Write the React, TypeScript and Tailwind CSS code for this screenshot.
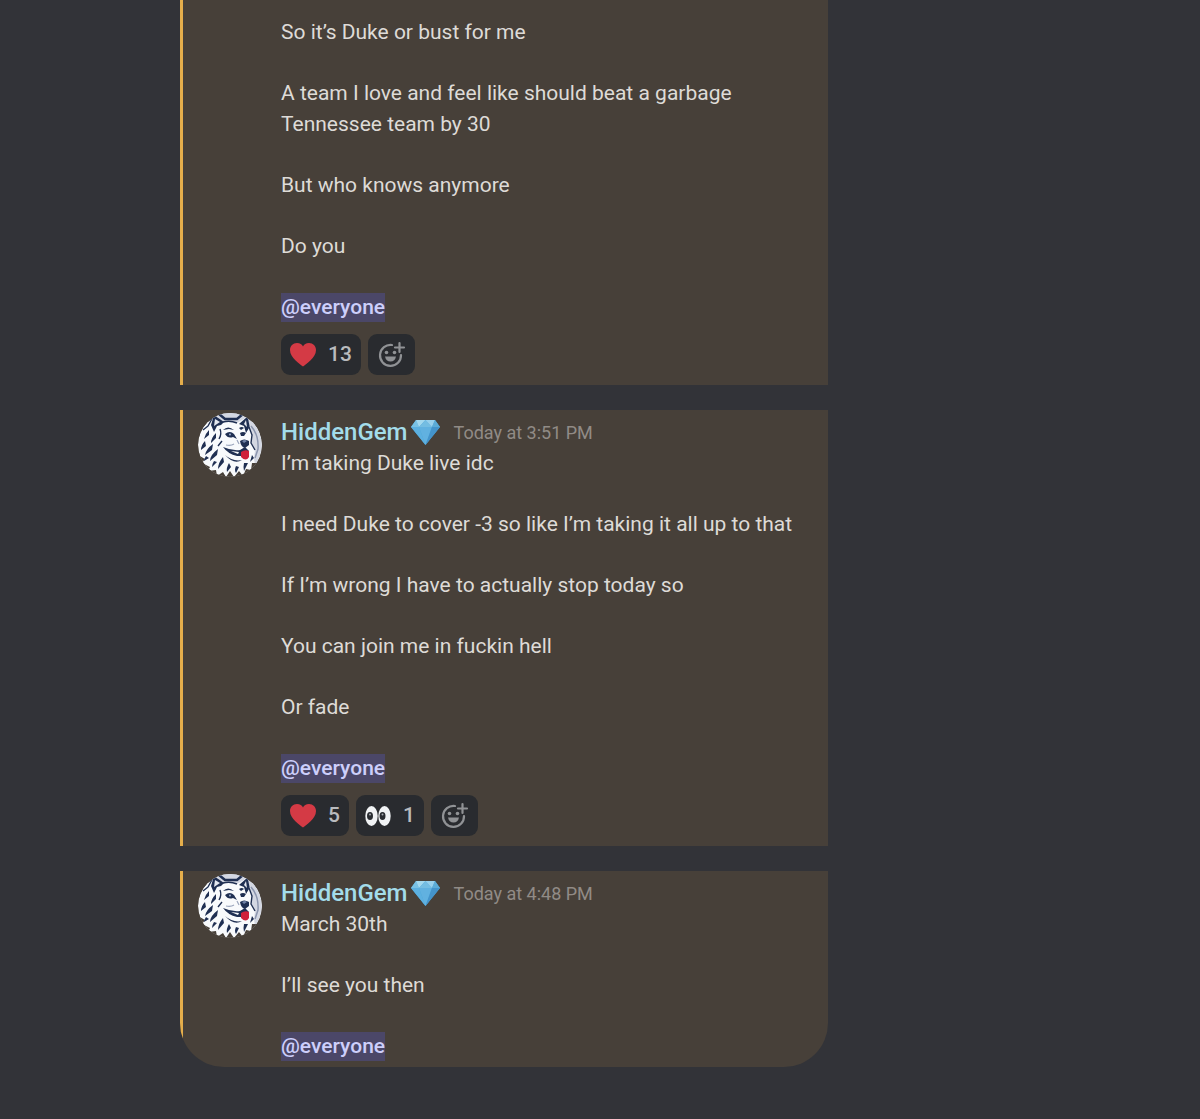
import type { ReactNode } from 'react';

type Reaction = { emoji: 'heart' | 'eyes'; count: number };

type Message = {
  id: number;
  time?: string;
  paragraphs: string[];
  reactions: Reaction[];
};

const messages: Message[] = [
  {
    id: 1,
    paragraphs: [
      'So it’s Duke or bust for me',
      'A team I love and feel like should beat a garbage Tennessee team by 30',
      'But who knows anymore',
      'Do you',
    ],
    reactions: [{ emoji: 'heart', count: 13 }],
  },
  {
    id: 2,
    time: 'Today at 3:51 PM',
    paragraphs: [
      'I’m taking Duke live idc',
      'I need Duke to cover -3 so like I’m taking it all up to that',
      'If I’m wrong I have to actually stop today so',
      'You can join me in fuckin hell',
      'Or fade',
    ],
    reactions: [
      { emoji: 'heart', count: 5 },
      { emoji: 'eyes', count: 1 },
    ],
  },
  {
    id: 3,
    time: 'Today at 4:48 PM',
    paragraphs: ['March 30th', 'I’ll see you then'],
    reactions: [],
  },
];

function HuskyAvatar() {
  return (
    <svg viewBox="0 0 64 64" className="mt-[3px] h-16 w-16 rounded-full" aria-hidden="true">
      <circle cx="32" cy="32" r="32" fill="#f8fafc" />
      {/* ball behind the head */}
      <path d="M18 0 H46 Q62 10 64 32 Q63 46 57 52 L52 20 L44 10 L22 10 Z" fill="#d3d7e2" />
      <path d="M21 1 L27 6 H39 L45 1" fill="none" stroke="#1f2f52" strokeWidth="2.500" />
      <path d="M53 13 Q61 22 60 36 L57 45" fill="none" stroke="#8b95ae" strokeWidth="1.500" />
      <path d="M25 9 Q32 7 39 10 L49 4 L51 14 L54 22 L53 30 L57 37 L56 46 L46 54 L20 50 L6 30 L5 16 L10 13 L16 2 Z" fill="#f8fafc" />
      <path
        d="M25 9 Q32 7 39 10 M16 2 L10 13 L5 17 M49 4 L51 14 L54 22 L53 30 L57 37"
        fill="none"
        stroke="#1f2f52"
        strokeWidth="1.400"
        strokeLinejoin="round"
      />
      {/* gaps between the tufts of the ruff */}
      <path
        d="M0 42 L7 46 L4 50 L12 54 L10 58 L18 57 L19 63 L25 59 L28 64 L32 58 L36 64 L41 58 L45 63 L48 56 L53 57 L54 50 L60 50 L58 64 H8 L0 52 Z"
        fill="#474039"
      />
      {/* ears */}
      <path d="M16 2 L13 12 L16 19 L19 13 L23 12 L26 9 Z" fill="#1f2f52" />
      <path d="M17 6 L16 13 L22 9 Z" fill="#e4e8f0" />
      <path d="M49 4 L41 11 L46 13 L48 20 L51 15 Z" fill="#1f2f52" />
      <path d="M48 7 L46 11 L49 14 Z" fill="#e4e8f0" />
      {/* brows and eyes */}
      <path d="M25 17 Q30 12 36 17 L31 16 Z" fill="#1f2f52" />
      <path d="M27 21 Q32 17 36 21 L39 26 L35 24 Q30 26 27 21 Z" fill="#1f2f52" />
      <path d="M42 20 Q45 18 48 20 L46 23 L43 23 Z" fill="#1f2f52" />
      <path d="M41 15 Q44 13 46 15 L43 17 Z" fill="#1f2f52" />
      <circle cx="32" cy="21.500" r="0.900" fill="#a9bbd8" />
      {/* muzzle */}
      <path d="M39 27 L41 31 M36 31 Q33 33 28 32" fill="none" stroke="#9aa5bc" strokeWidth="1.200" />
      <path d="M42 28 Q46 25 51 28 L51 32 L47 35 Q43 34 42 28 Z" fill="#1f2f52" />
      <path d="M44 28 Q47 26 49 28 L46 30 Z" fill="#7183a6" />
      <path d="M25 34 Q34 38 42 37 L47 34 L51 38 L46 43 L39 43 Q30 41 25 34 Z" fill="#1f2f52" />
      <path d="M33 38 L41 39 L40 41 Z" fill="#f8fafc" />
      <path d="M43 39 Q47 36 51 38 L51 44 Q48 49 43 44 Z" fill="#cf203a" />
      <path d="M27 42 Q35 49 44 47 Q36 52 27 42 Z" fill="#1f2f52" />
      {/* fur */}
      <path
        d="M11 17 Q7 21 6 26 L11 22 Z M18 20 Q13 25 13 30 L18 25 Z M7 28 Q3 32 3 37 L8 33 Z M15 31 Q8 36 7 42 L14 37 Z M20 36 Q12 42 12 48 L19 42 Z M8 43 Q6 46 6 48 L11 45 Z M16 48 Q14 51 14 54 L19 49 Z M25 44 Q20 50 20 56 L26 49 Z M31 50 Q28 55 29 59 L33 54 Z M38 53 Q36 57 38 60 L41 54 Z M46 50 Q45 54 46 58 L50 50 Z M54 42 L52 49 L56 45 Z"
        fill="#1f2f52"
      />
      <path d="M22 16 Q24 21 21 26 M24 28 L20 33" fill="none" stroke="#1f2f52" strokeWidth="1.400" />
    </svg>
  );
}

function Gem() {
  return (
    <svg viewBox="0 0 29 26" className="ml-[3px] h-[26px] w-[29px]" role="img" aria-label="gem">
      <path d="M5 1 H24 L29 8 L14.500 26 L0 8 Z" fill="#4ba3d8" />
      <path d="M5 1 L8 8 H0 Z" fill="#79c1e4" />
      <path d="M5 1 H14.500 L8 8 Z" fill="#a3d8ee" />
      <path d="M14.500 1 L21 8 H8 Z" fill="#74bde2" />
      <path d="M14.500 1 H24 L21 8 Z" fill="#98d0ec" />
      <path d="M24 1 L29 8 H21 Z" fill="#5cabd6" />
      <path d="M0 8 H8 L14.500 26 Z" fill="#5cb0e0" />
      <path d="M8 8 H21 L14.500 26 Z" fill="#61b1e0" />
      <path d="M21 8 H29 L14.500 26 Z" fill="#4494cb" />
    </svg>
  );
}

function Heart() {
  return (
    <svg viewBox="0 0 26 26" className="h-[26px] w-[26px]" aria-hidden="true">
      <path
        d="M13 24.500 C10 22 0 16 0 8 C0 4 3 1 7 1 C10 1 12 2.500 13 4.500 C14 2.500 16 1 19 1 C23 1 26 4 26 8 C26 16 16 22 13 24.500 Z"
        fill="#d43a45"
      />
    </svg>
  );
}

function Eyes() {
  return (
    <svg viewBox="0 0 26 26" className="h-[26px] w-[26px]" aria-hidden="true">
      <ellipse cx="6.500" cy="13" rx="6.200" ry="10" fill="#f1f3f5" />
      <ellipse cx="19.500" cy="13" rx="6.200" ry="10" fill="#f1f3f5" />
      <ellipse cx="5" cy="13" rx="3" ry="4" fill="#292c31" />
      <ellipse cx="17.500" cy="13" rx="3" ry="4" fill="#292c31" />
      <circle cx="5" cy="11.500" r="1" fill="#a9adb3" />
      <circle cx="17.500" cy="11.500" r="1" fill="#a9adb3" />
    </svg>
  );
}

function AddReactionIcon() {
  return (
    <svg viewBox="0 0 29 28" className="h-7 w-[29px]" fill="none" stroke="#909295" strokeWidth="2.200" aria-hidden="true">
      <path d="M15 4 A10.500 10.500 0 1 0 24 14" strokeLinecap="round" />
      <path d="M22.500 2 V11 M18 6.500 H27" strokeLinecap="round" />
      <circle cx="9.500" cy="11.500" r="1.800" fill="#909295" stroke="none" />
      <circle cx="17.500" cy="11.500" r="1.800" fill="#909295" stroke="none" />
      <path d="M8 15.500 H19 Q18 20.500 13.500 20.500 Q9 20.500 8 15.500 Z" fill="#909295" stroke="none" />
    </svg>
  );
}

function ReactionButton({ label, children }: { label: string; children: ReactNode }) {
  return (
    <button
      type="button"
      aria-label={label}
      className="flex h-[41px] items-center gap-3 rounded-[9px] bg-[#292b2f] px-[9px] text-[21px] font-medium text-[#b9bbbe]"
    >
      {children}
    </button>
  );
}

function MessageRow({ message }: { message: Message }) {
  const { time, paragraphs, reactions } = message;

  return (
    <article className="flex gap-[19px] border-l-[3px] border-[#e5ae4b] bg-[#474039] pl-[15px] pr-6">
      <div className="w-16 shrink-0">{time && <HuskyAvatar />}</div>

      <div className={time ? 'min-w-0 flex-1 pt-[5px]' : 'min-w-0 flex-1 pt-[17px]'}>
        {time && (
          <header className="flex h-[33px] items-center">
            <h2 className="text-[24px] font-medium text-[#a3dcea]">HiddenGem</h2>
            <Gem />
            <time className="ml-3.5 pt-0.5 text-[18px] text-[#918b86]">{time}</time>
          </header>
        )}

        <div className="flex flex-col gap-[30px] leading-[31px]">
          {paragraphs.map((text) => (
            <p key={text}>{text}</p>
          ))}
          <p>
            <a href="#everyone" className="inline-block bg-[#4b4768] font-medium leading-[29px] text-[#cdcffb]">
              @everyone
            </a>
          </p>
        </div>

        {reactions.length > 0 ? (
          <div className="flex gap-[7px] pb-[10px] pt-[11px]">
            {reactions.map(({ emoji, count }) => (
              <ReactionButton key={emoji} label={`${emoji} ${count}`}>
                {emoji === 'heart' ? <Heart /> : <Eyes />}
                <span>{count}</span>
              </ReactionButton>
            ))}
            <ReactionButton label="Add reaction">
              <AddReactionIcon />
            </ReactionButton>
          </div>
        ) : (
          <div className="h-[5px]" />
        )}
      </div>
    </article>
  );
}

export default function App() {
  return (
    <div className="min-h-screen bg-[#323338] font-['Roboto',sans-serif] text-[21px] text-[#dedbd7]">
      <main className="ml-[15%] flex w-[54%] min-w-[600px] flex-col gap-[25px] overflow-hidden rounded-b-[44px]">
        {messages.map((message) => (
          <MessageRow key={message.id} message={message} />
        ))}
      </main>
    </div>
  );
}
